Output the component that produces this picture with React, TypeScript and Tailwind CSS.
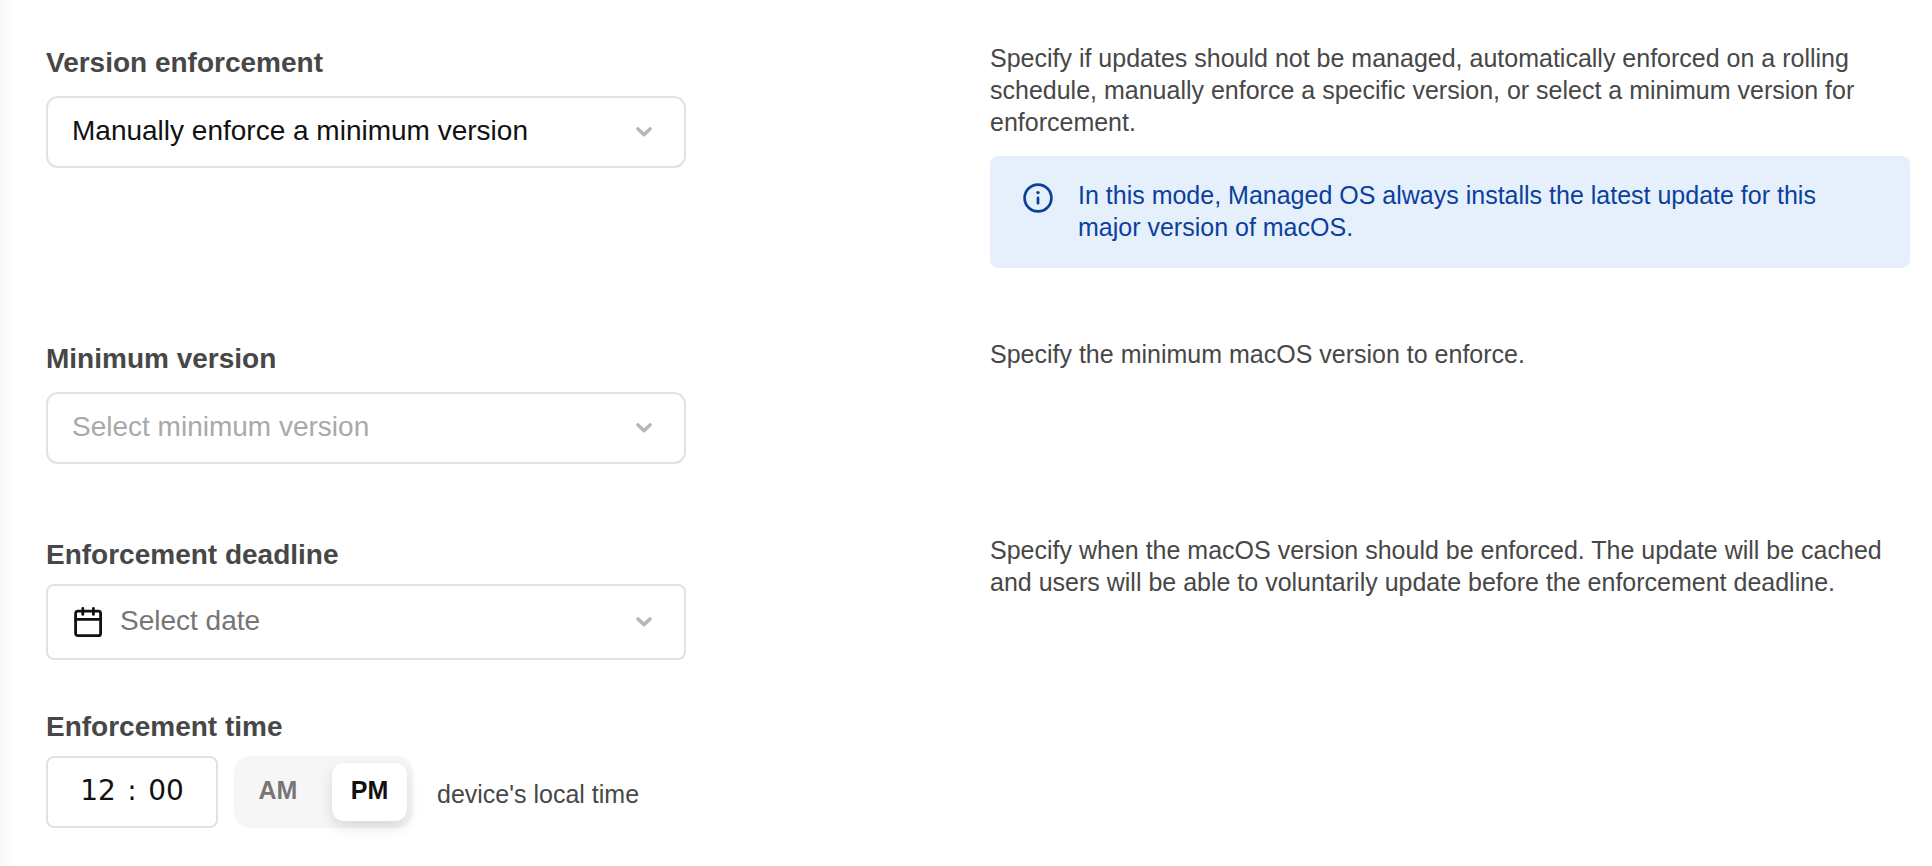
import { useState } from 'react';
import type { ReactNode } from 'react';
import clsx from 'clsx';

function Chevron() {
  return (
    <svg
      aria-hidden="true"
      viewBox="0 0 16 12"
      className="pointer-events-none absolute right-8 top-1/2 h-3 w-4 -translate-y-1/2"
      fill="none"
      stroke="#b8b8b8"
      strokeWidth="3.6"
      strokeLinecap="round"
      strokeLinejoin="round"
    >
      <path d="M2 3l6 5.6 6-5.6" />
    </svg>
  );
}

function CalendarIcon() {
  return (
    <svg aria-hidden="true" viewBox="0 0 28 30" className="h-[30px] w-7 shrink-0" fill="none" stroke="#111" strokeWidth="2.8">
      <rect x="1.6" y="4.2" width="25" height="24.4" rx="2.2" />
      <path d="M1.6 12.3h25M8.8 1.4v6M19.4 1.4v6" strokeLinecap="round" />
    </svg>
  );
}

function InfoIcon() {
  return (
    <svg aria-hidden="true" viewBox="0 0 30 30" className="mt-1 size-[30px] shrink-0" fill="none" stroke="#0b409c" strokeWidth="2.7">
      <circle cx="15" cy="15" r="13.4" />
      <path d="M15 14.8v5.4" strokeLinecap="round" />
      <circle cx="15" cy="9.6" r="1.7" fill="#0b409c" stroke="none" />
    </svg>
  );
}

function Label({ htmlFor, children }: { htmlFor: string; children: ReactNode }) {
  return (
    <label htmlFor={htmlFor} className="block text-[28px] leading-[42px] font-bold text-[#474747]">
      {children}
    </label>
  );
}

function SelectField({ id, label, value, muted }: { id: string; label: string; value: string; muted?: boolean }) {
  return (
    <>
      <Label htmlFor={id}>{label}</Label>
      <div className="relative mt-3 h-[72px] rounded-xl border-2 border-[#e2e2e2] bg-white">
        <select
          id={id}
          className={clsx(
            'size-full appearance-none rounded-xl pb-0.5 pl-6 text-[28px]',
            muted ? 'text-[#a9a9a9]' : 'text-[#111]',
          )}
        >
          <option>{value}</option>
        </select>
        <Chevron />
      </div>
    </>
  );
}

/** One setting: the control on the left, the explanation on the right. */
function Row({ help, children }: { help: ReactNode; children: ReactNode }) {
  return (
    <section className="grid grid-cols-[640px_minmax(0,920px)] justify-between">
      <div>{children}</div>
      <div className="text-[25px] leading-8 text-[#474747]">{help}</div>
    </section>
  );
}

export default function App() {
  const [period, setPeriod] = useState('PM');

  return (
    <main className="min-h-screen bg-[linear-gradient(to_right,#f7f7f7,#ffffff_16px)] font-['Liberation_Sans',Arial,sans-serif]">
      <form className="flex flex-col gap-[70px] pt-[42px] pr-[22px] pl-[46px]">
        <Row
          help={
            <>
              <p>
                Specify if updates should not be managed, automatically enforced on a rolling schedule, manually enforce
                a specific version, or select a minimum version for enforcement.
              </p>
              <div className="mt-[18px] flex gap-[25px] rounded-lg bg-[#e6f0fd] pt-[23px] pr-16 pb-[25px] pl-[33px] text-[#0b409c]">
                <InfoIcon />
                <p>In this mode, Managed OS always installs the latest update for this major version of macOS.</p>
              </div>
            </>
          }
        >
          <SelectField id="enforcement" label="Version enforcement" value="Manually enforce a minimum version" />
        </Row>

        <Row help={<p>Specify the minimum macOS version to enforce.</p>}>
          <SelectField id="minimum" label="Minimum version" value="Select minimum version" muted />
        </Row>

        <Row
          help={
            <p>
              Specify when the macOS version should be enforced. The update will be cached and users will be able to
              voluntarily update before the enforcement deadline.
            </p>
          }
        >
          <Label htmlFor="deadline">Enforcement deadline</Label>
          <div className="relative mt-2 flex h-[76px] items-center gap-[18px] rounded-lg border-2 border-[#e2e2e2] bg-white pl-[26px]">
            <CalendarIcon />
            <input
              id="deadline"
              type="text"
              placeholder="Select date"
              className="w-full bg-transparent pb-0.5 text-[28px] text-[#111] outline-none placeholder:text-[#767676]"
            />
            <Chevron />
          </div>

          <div className="mt-[46px]">
            <Label htmlFor="hour">Enforcement time</Label>
            <div className="mt-2 flex items-center">
              <div className="flex h-[72px] w-[172px] items-center justify-center rounded-lg border-2 border-[#e2e2e2] bg-white pb-0.5 font-['DejaVu_Sans',sans-serif] text-[28px] text-[#111]">
                <input id="hour" type="text" defaultValue="12" className="w-10 bg-transparent text-center outline-none" />
                <span className="w-7 text-center">:</span>
                <input
                  type="text"
                  aria-label="Minutes"
                  defaultValue="00"
                  className="w-10 bg-transparent text-center outline-none"
                />
              </div>
              <div
                role="group"
                aria-label="AM or PM"
                className="ml-4 flex h-[72px] w-[179px] items-center justify-between rounded-2xl bg-[#f6f6f6] pr-1.5 text-[25px] font-bold"
              >
                {['AM', 'PM'].map((p) => (
                  <button
                    key={p}
                    type="button"
                    aria-pressed={period === p}
                    onClick={() => setPeriod(p)}
                    className={clsx(
                      'h-[58px] rounded-xl pb-0.5',
                      period === p
                        ? 'w-[75px] bg-white text-[#111] shadow-[0_6px_14px_rgba(0,0,0,0.12)]'
                        : 'w-[88px] text-[#767676]',
                    )}
                  >
                    {p}
                  </button>
                ))}
              </div>
              <span className="ml-6 pt-1.5 text-[25px] text-[#474747]">device's local time</span>
            </div>
          </div>
        </Row>
      </form>
    </main>
  );
}
